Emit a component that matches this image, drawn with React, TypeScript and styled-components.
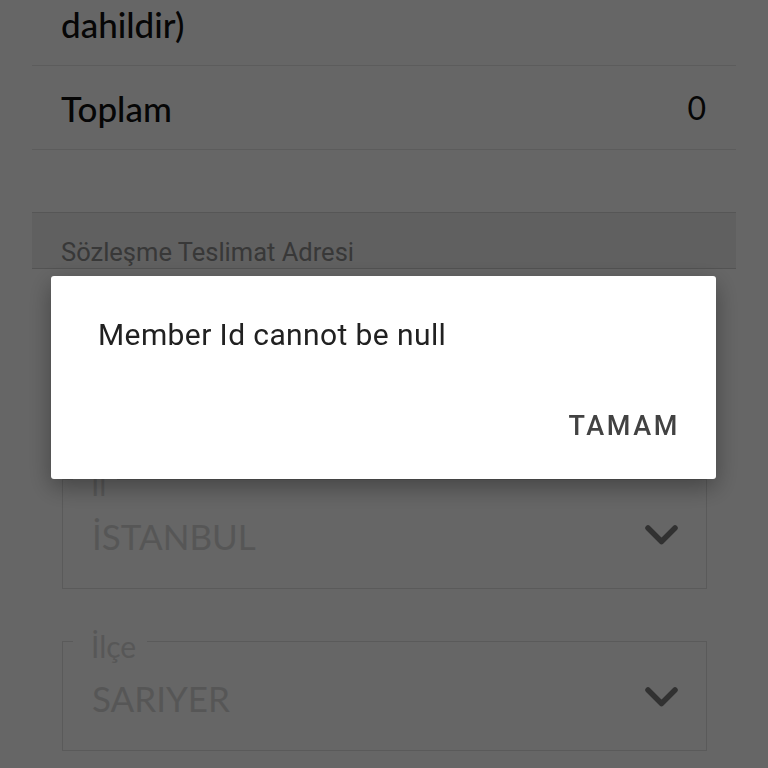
import styled, { createGlobalStyle } from 'styled-components';

// Base page, no scrolling; the shot shows the page scrolled a bit down
const GlobalStyle = createGlobalStyle`
  html, body, #root {
    margin: 0;
    padding: 0;
    height: 100%;
    overflow: hidden;
    background: #ffffff;
  }
`;

const Page = styled.div`
  margin: -69px 32px 0;
  font-family: Lato, 'Noto Sans', sans-serif;
  color: #111;
`;

const SummaryRow = styled.div<{ $tall?: boolean }>`
  display: flex;
  justify-content: space-between;
  align-items: center;
  padding: ${(p) => (p.$tall ? '24px 30px 18px 29px' : '24px 30px 23px 29px')};
  border-bottom: 1px solid #e6e6e6;
  font-size: 35px;
  line-height: ${(p) => (p.$tall ? '46px' : '36px')};
  font-weight: 500;
`;

const Amount = styled.span`
  font-weight: 400;
  font-size: 32px;
`;

const SectionHeader = styled.div`
  margin-top: 62px;
  height: 55px;
  padding: 0 29px;
  display: flex;
  align-items: flex-end;
  background: #f0f0f0;
  border-top: 1px solid #d8d8d8;
  border-bottom: 1px solid #cfcfcf;
  font-family: Roboto, 'Liberation Sans', sans-serif;
  font-size: 25.5px;
  line-height: 32px;
  color: #8c8c8c;
`;

const Form = styled.div`
  padding: 0 29px 0 30px;
  display: flex;
  flex-direction: column;
  gap: 46px;
  margin-top: 42px;
`;

const Field = styled.fieldset`
  margin: 0;
  height: 116px;
  box-sizing: border-box;
  padding: 0 26px 0 29px;
  border: 1px solid #e1e1e1;
  min-width: 0;
`;

const Legend = styled.legend`
  margin-left: -19px;
  padding: 10px 11px 0 18px;
  font-size: 30px;
  line-height: 2px;
  color: #dadada;
`;

const Row = styled.div`
  height: 102px;
  display: flex;
  align-items: center;
  justify-content: space-between;
`;

const Value = styled.span`
  font-size: 35px;
  font-weight: 400;
  color: #d8d8d8;
`;

const Overlay = styled.div`
  position: fixed;
  inset: 0;
  background: rgba(0, 0, 0, 0.6);
  display: flex;
  align-items: center;
  justify-content: center;
  padding-bottom: 13px;
  box-sizing: border-box;
`;

const Dialog = styled.div`
  width: 665px;
  height: 203px;
  box-sizing: border-box;
  margin-left: -1px;
  background: #fff;
  border-radius: 3px;
  box-shadow: 0 8px 24px rgba(0, 0, 0, 0.35);
  padding: 41px 32px 25px 47px;
  display: flex;
  flex-direction: column;
  font-family: Roboto, 'Liberation Sans', sans-serif;
`;

const Message = styled.p`
  margin: 0;
  font-size: 30px;
  line-height: 36px;
  letter-spacing: 0.4px;
  color: #212121;
`;

const Actions = styled.div`
  margin-top: auto;
  display: flex;
  justify-content: flex-end;
`;

const TextButton = styled.button`
  border: none;
  background: none;
  height: 56px;
  padding: 0 4px 0 8px;
  font-family: Roboto, 'Liberation Sans', sans-serif;
  font-size: 27px;
  font-weight: 500;
  letter-spacing: 2.6px;
  color: #424242;
`;

const Chevron = () => (
  <svg width="36" height="24" viewBox="0 0 36 24">
    <path d="M4 4 L17.5 17.5 L31 4" fill="none" stroke="#7c7c7c" strokeWidth="5.5" strokeLinecap="round" strokeLinejoin="round" />
  </svg>
);

// first field sits behind the dialog
const fields = [
  { label: '', value: '' },
  { label: 'İl', value: 'İSTANBUL' },
  { label: 'İlçe', value: 'SARIYER' },
];

const App = () => (
  <>
    <GlobalStyle />
    <Page>
      <SummaryRow $tall>
        <span>
          Kurulum Bedeli (KDV
          <br />
          dahildir)
        </span>
      </SummaryRow>
      <SummaryRow>
        <span>Toplam</span>
        <Amount>0</Amount>
      </SummaryRow>
      <SectionHeader>Sözleşme Teslimat Adresi</SectionHeader>
      <Form>
        {fields.map((f, i) => (
          <Field key={i}>
            <Legend>{f.label}</Legend>
            <Row>
              <Value>{f.value}</Value>
              {f.value && <Chevron />}
            </Row>
          </Field>
        ))}
      </Form>
    </Page>
    <Overlay>
      <Dialog>
        <Message>Member Id cannot be null</Message>
        <Actions>
          <TextButton>TAMAM</TextButton>
        </Actions>
      </Dialog>
    </Overlay>
  </>
);

export default App;
